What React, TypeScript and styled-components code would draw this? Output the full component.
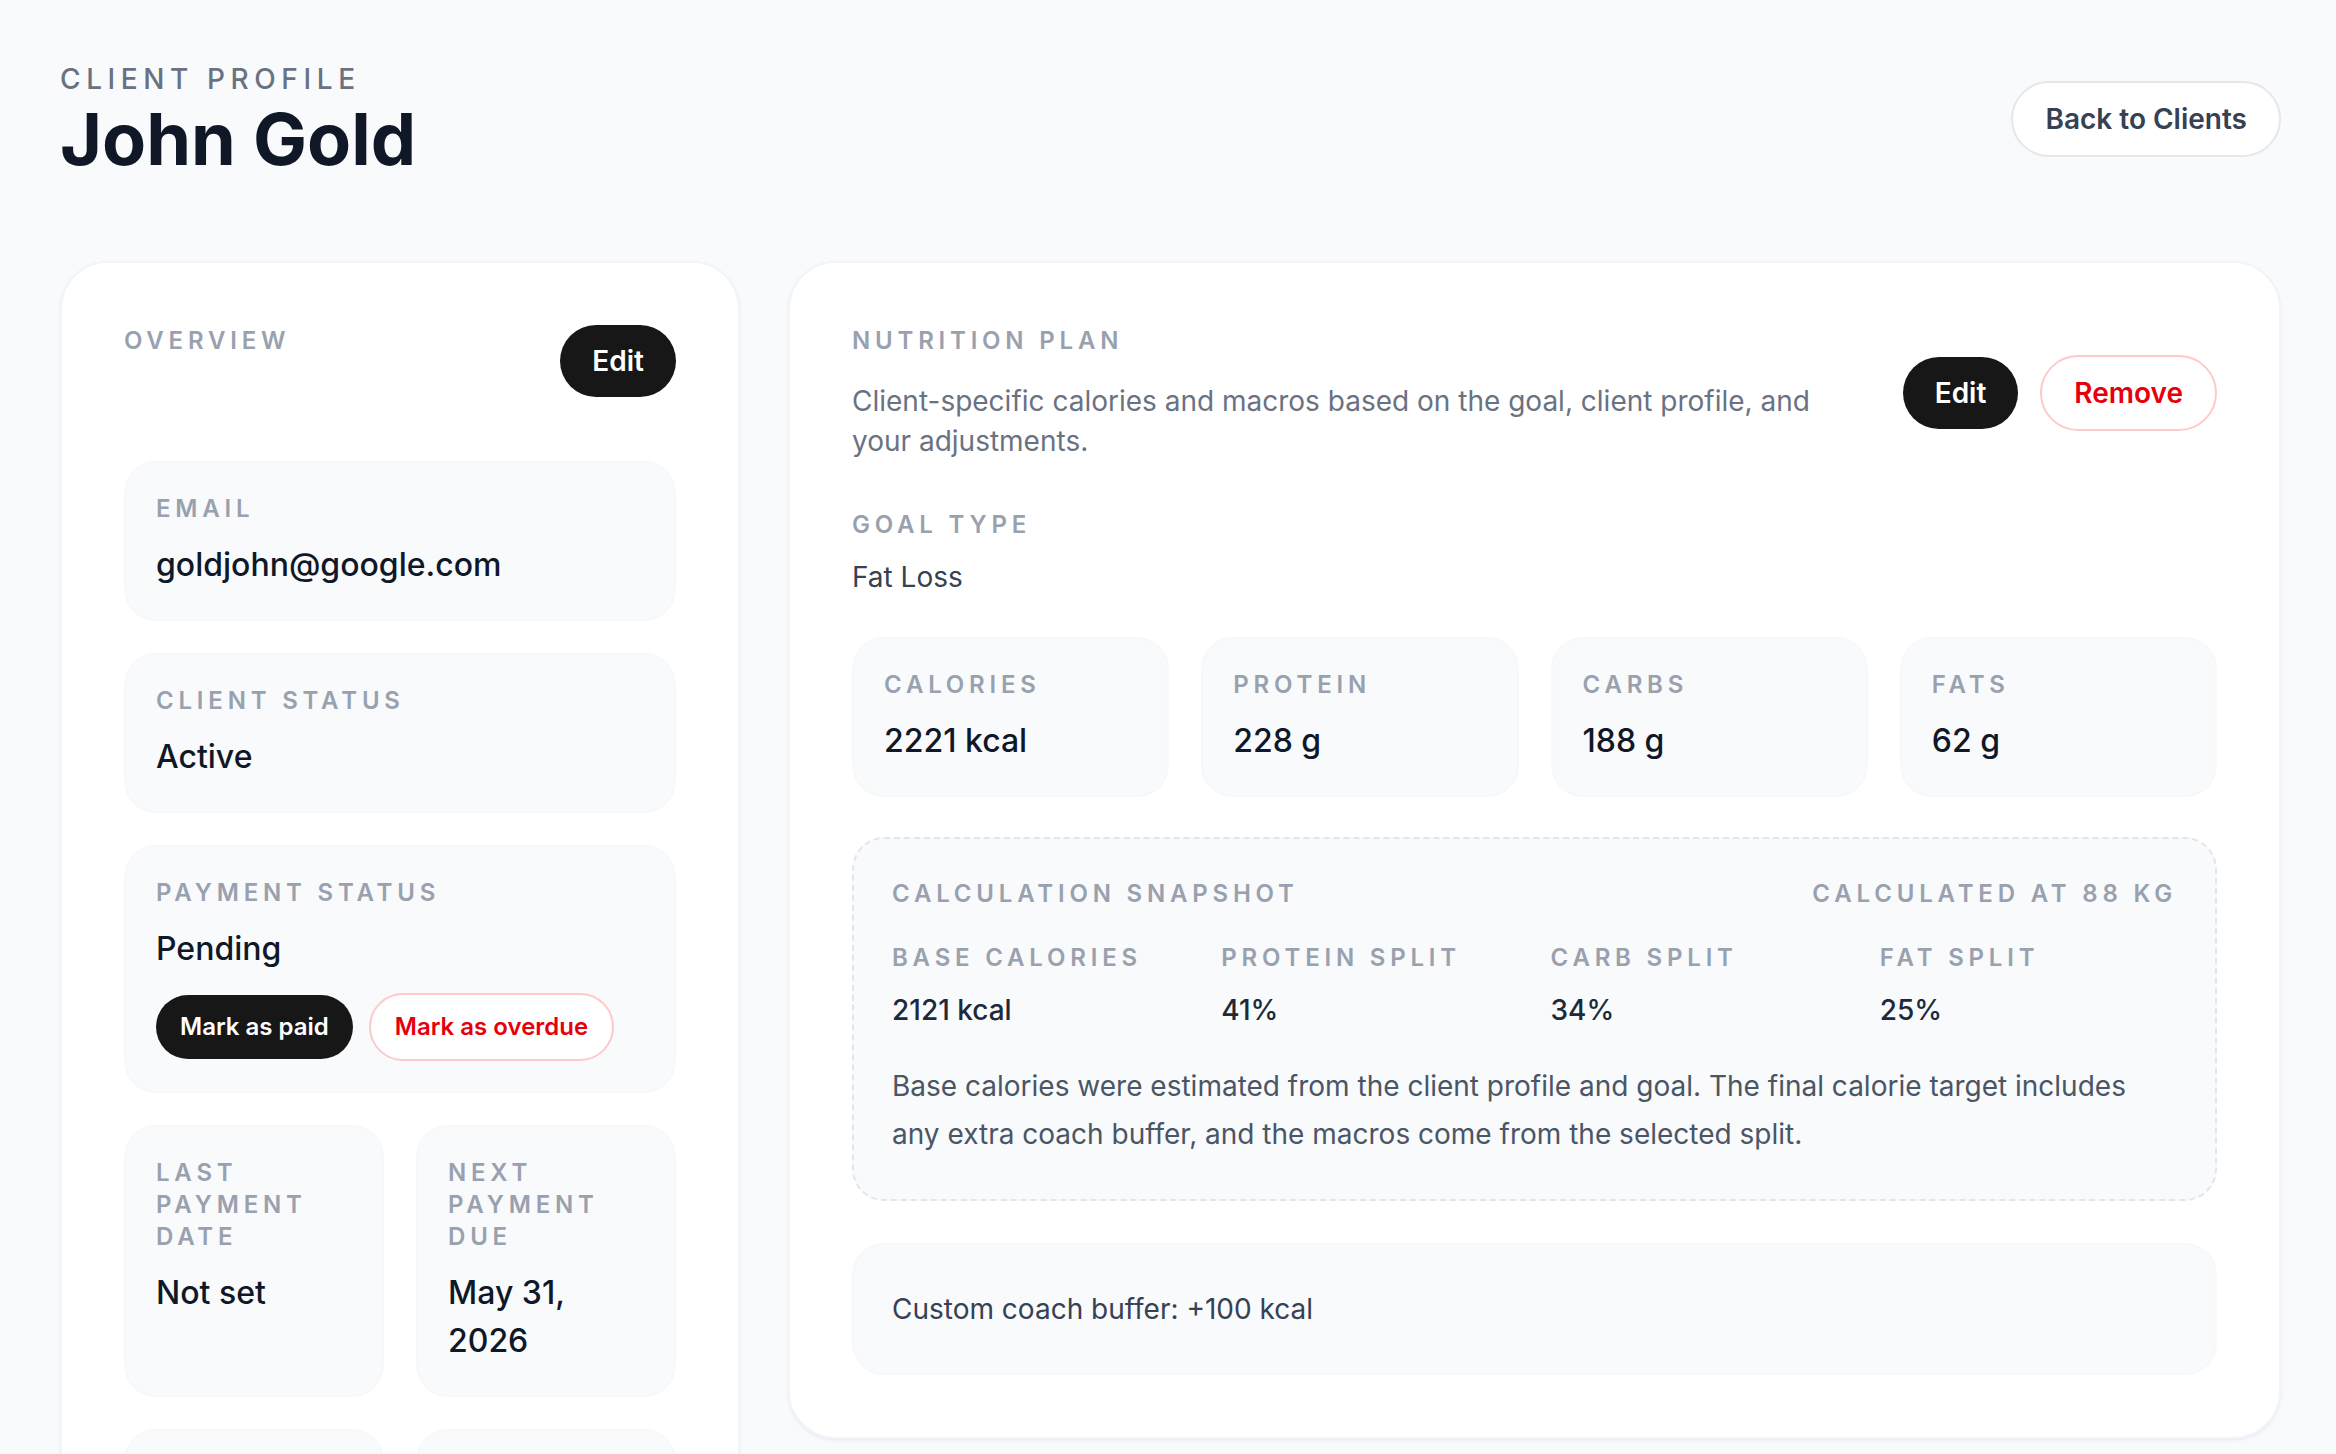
import React from "react";
import styled, { createGlobalStyle, css } from "styled-components";

const GlobalStyle = createGlobalStyle`
  * { box-sizing: border-box; }
  html, body { margin: 0; padding: 0; }
  body {
    background: #f8fafc;
    font-family: Inter, "Noto Sans", "Liberation Sans", sans-serif;
    color: #101828;
    -webkit-font-smoothing: antialiased;
  }
`;

const Page = styled.main`
  padding: 59px 55px 96px 60px;
`;

const PageHeader = styled.header`
  display: flex;
  align-items: center;
  justify-content: space-between;
  margin-bottom: 82px;
`;

const Eyebrow = styled.p`
  margin: 0;
  font-size: 28px;
  line-height: 40px;
  font-weight: 500;
  letter-spacing: 0.2em;
  text-transform: uppercase;
  color: #6a7282;
`;

const Title = styled.h1`
  margin: 0;
  font-size: 72px;
  line-height: 80px;
  font-weight: 700;
  color: #101828;
`;

type Variant = "dark" | "danger" | "ghost";

const PillButton = styled.button<{ $variant: Variant; $small?: boolean }>`
  font-family: inherit;
  border-radius: 9999px;
  font-weight: 600;
  cursor: pointer;
  white-space: nowrap;
  ${({ $small }) =>
    $small
      ? css`
          font-size: 24px;
          line-height: 32px;
          padding: 16px 24px;
        `
      : css`
          font-size: 28px;
          line-height: 40px;
          padding: 16px 32px;
        `}
  ${({ $variant }) =>
    $variant === "dark"
      ? css`
          background: #171717;
          color: #ffffff;
          border: none;
        `
      : $variant === "danger"
      ? css`
          background: #ffffff;
          color: #e7000b;
          border: 2px solid #ffc9c9;
        `
      : css`
          background: #ffffff;
          color: #364153;
          border: 2px solid #e5e7eb;
        `}
`;

const Layout = styled.div`
  display: grid;
  grid-template-columns: 680px 1fr;
  gap: 48px;
  align-items: start;
`;

const Card = styled.section`
  background: #ffffff;
  border: 2px solid #f1f5f9;
  border-radius: 48px;
  padding: 62px;
  box-shadow: 0 2px 4px rgba(15, 23, 42, 0.04), 0 1px 2px rgba(15, 23, 42, 0.04);
`;

const CardHeader = styled.div<{ $align: "start" | "center" }>`
  display: flex;
  justify-content: space-between;
  align-items: ${({ $align }) => ($align === "start" ? "flex-start" : "center")};
  gap: 32px;
`;

const Label = styled.div`
  font-size: 24px;
  line-height: 32px;
  font-weight: 600;
  letter-spacing: 0.2em;
  text-transform: uppercase;
  color: #99a1af;
`;

const TileStack = styled.div`
  display: flex;
  flex-direction: column;
  gap: 32px;
  margin-top: 64px;
`;

const Tile = styled.div`
  background: #f8fafc;
  border: 2px solid #f6f8fa;
  border-radius: 32px;
  padding: 30px;
`;

const TileValue = styled.div`
  margin-top: 16px;
  font-size: 32px;
  line-height: 48px;
  font-weight: 500;
  color: #101828;
`;

const ActionRow = styled.div`
  display: flex;
  align-items: center;
  gap: 16px;
  margin-top: 20px;
`;

const TwoCol = styled.div`
  display: grid;
  grid-template-columns: 1fr 1fr;
  gap: 32px;
`;

const HeaderText = styled.div`
  flex: 1;
  min-width: 0;
`;

const Description = styled.p`
  margin: 24px 0 0;
  max-width: 990px;
  font-size: 28px;
  line-height: 40px;
  color: #6a7282;
`;

const ButtonGroup = styled.div`
  display: flex;
  align-items: center;
  gap: 22px;
  flex-shrink: 0;
`;

const Section = styled.div<{ $gap: number }>`
  margin-top: ${({ $gap }) => $gap}px;
`;

const PlainValue = styled.div`
  margin-top: 16px;
  font-size: 28px;
  line-height: 40px;
  color: #364153;
`;

const MacroGrid = styled.div`
  display: grid;
  grid-template-columns: repeat(4, 1fr);
  gap: 32px;
  margin-top: 40px;
`;

const Snapshot = styled.div`
  margin-top: 40px;
  background: #f8fafc;
  border: 2px dashed #e2e6ec;
  border-radius: 32px;
  padding: 39px 38px 41px;
`;

const SnapshotHead = styled.div`
  display: flex;
  justify-content: space-between;
  align-items: center;
`;

const SplitGrid = styled.div`
  display: grid;
  grid-template-columns: repeat(4, 1fr);
  gap: 32px;
  margin-top: 32px;
`;

const SplitValue = styled.div`
  margin-top: 16px;
  font-size: 28px;
  line-height: 40px;
  font-weight: 500;
  color: #1e2939;
`;

const Note = styled.p`
  margin: 32px 0 0;
  font-size: 28px;
  line-height: 48px;
  color: #4a5565;
`;

const BufferBox = styled.div`
  margin-top: 42px;
  background: #f8fafc;
  border: 2px solid #f6f8fa;
  border-radius: 32px;
  padding: 40px 38px;
  font-size: 28px;
  line-height: 48px;
  color: #364153;
`;

const macros = [
  { label: "Calories", value: "2221 kcal" },
  { label: "Protein", value: "228 g" },
  { label: "Carbs", value: "188 g" },
  { label: "Fats", value: "62 g" },
];

const splits = [
  { label: "Base calories", value: "2121 kcal" },
  { label: "Protein split", value: "41%" },
  { label: "Carb split", value: "34%" },
  { label: "Fat split", value: "25%" },
];

export default function App() {
  return (
    <>
      <GlobalStyle />
      <Page>
        <PageHeader>
          <div>
            <Eyebrow>Client profile</Eyebrow>
            <Title>John Gold</Title>
          </div>
          <PillButton $variant="ghost">Back to Clients</PillButton>
        </PageHeader>

        <Layout>
          <Card>
            <CardHeader $align="start">
              <Label>Overview</Label>
              <PillButton $variant="dark">Edit</PillButton>
            </CardHeader>
            <TileStack>
              <Tile>
                <Label>Email</Label>
                <TileValue>goldjohn@google.com</TileValue>
              </Tile>
              <Tile>
                <Label>Client status</Label>
                <TileValue>Active</TileValue>
              </Tile>
              <Tile>
                <Label>Payment status</Label>
                <TileValue>Pending</TileValue>
                <ActionRow>
                  <PillButton $variant="dark" $small>
                    Mark as paid
                  </PillButton>
                  <PillButton $variant="danger" $small>
                    Mark as overdue
                  </PillButton>
                </ActionRow>
              </Tile>
              <TwoCol>
                <Tile>
                  <Label>Last payment date</Label>
                  <TileValue>Not set</TileValue>
                </Tile>
                <Tile>
                  <Label>Next payment due</Label>
                  <TileValue>May 31, 2026</TileValue>
                </Tile>
              </TwoCol>
              <TwoCol>
                <Tile>
                  <Label>Start date</Label>
                  <TileValue>Not set</TileValue>
                </Tile>
                <Tile>
                  <Label>Check-in</Label>
                  <TileValue>Weekly</TileValue>
                </Tile>
              </TwoCol>
            </TileStack>
          </Card>

          <Card>
            <CardHeader $align="center">
              <HeaderText>
                <Label>Nutrition plan</Label>
                <Description>
                  Client-specific calories and macros based on the goal, client profile, and your
                  adjustments.
                </Description>
              </HeaderText>
              <ButtonGroup>
                <PillButton $variant="dark">Edit</PillButton>
                <PillButton $variant="danger">Remove</PillButton>
              </ButtonGroup>
            </CardHeader>

            <Section $gap={48}>
              <Label>Goal type</Label>
              <PlainValue>Fat Loss</PlainValue>
            </Section>

            <MacroGrid>
              {macros.map((m) => (
                <Tile key={m.label}>
                  <Label>{m.label}</Label>
                  <TileValue>{m.value}</TileValue>
                </Tile>
              ))}
            </MacroGrid>

            <Snapshot>
              <SnapshotHead>
                <Label>Calculation snapshot</Label>
                <Label>Calculated at 88 kg</Label>
              </SnapshotHead>
              <SplitGrid>
                {splits.map((s) => (
                  <div key={s.label}>
                    <Label>{s.label}</Label>
                    <SplitValue>{s.value}</SplitValue>
                  </div>
                ))}
              </SplitGrid>
              <Note>
                Base calories were estimated from the client profile and goal. The final calorie
                target includes any extra coach buffer, and the macros come from the selected split.
              </Note>
            </Snapshot>

            <BufferBox>Custom coach buffer: +100 kcal</BufferBox>
          </Card>
        </Layout>
      </Page>
    </>
  );
}
